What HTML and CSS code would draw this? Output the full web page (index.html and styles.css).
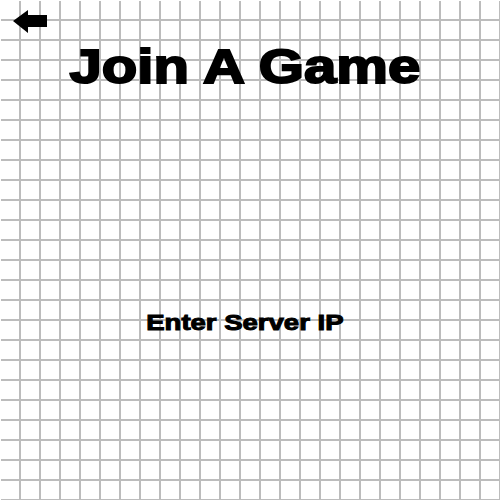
FILE: index.html
```html
<!DOCTYPE html>
<html>
<head>
<meta charset="utf-8">
<link rel="stylesheet" href="styles.css">
</head>
<body>
<div class="page">
  <div class="topbar">
    <svg class="back" width="36" height="26" viewBox="0 0 36 26">
      <polygon points="0,12 15,1 15,6 34,6 34,18 15,18 15,24" fill="#000"/>
    </svg>
  </div>
  <h1 class="title"><span class="stretch">Join A Game</span></h1>
  <div class="prompt"><span class="stretch">Enter Server IP</span></div>
</div>
</body>
</html>
```
FILE: styles.css
```css
html, body {
  margin: 0;
  padding: 0;
  background: #fff;
}
.page {
  width: 500px;
  height: 500px;
  box-sizing: border-box;
  padding: 1px 0 0 1px;
  background-color: #fff;
  background-image:
    linear-gradient(to right, #bcbcbc 0, #bcbcbc 1px, transparent 1px, transparent 19px, #bcbcbc 19px),
    linear-gradient(to bottom, #bcbcbc 0, #bcbcbc 1px, transparent 1px, transparent 19px, #bcbcbc 19px);
  background-size: 20px 20px;
  background-origin: padding-box;
  background-clip: content-box;
  font-family: "Liberation Sans", Arial, sans-serif;
  font-weight: bold;
  color: #000;
  display: flex;
  flex-direction: column;
}
.topbar {
  height: 35px;
  padding: 8px 0 0 12px;
  box-sizing: border-box;
}
.back {
  display: block;
}
.title {
  margin: 8px 0 0 0;
  font-size: 48px;
  line-height: 45px;
  text-align: center;
  padding-right: 12px;
  -webkit-text-stroke: 2px #000;
}
.title .stretch {
  transform: scaleX(1.21);
}
.prompt {
  margin-top: 223px;
  font-size: 22px;
  line-height: 21px;
  text-align: center;
  padding-right: 12px;
  -webkit-text-stroke: 1px #000;
}
.stretch {
  display: inline-block;
  transform: scaleX(1.25);
}
```
